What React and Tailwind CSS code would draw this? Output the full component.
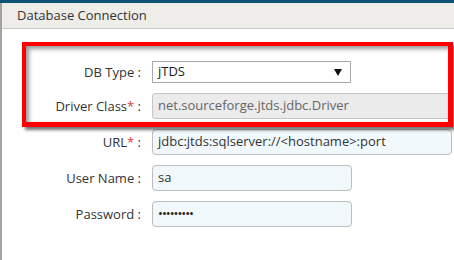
import React from "react";

const font = { fontFamily: "'Open Sans', 'Noto Sans', sans-serif" };

function Label({ children, req }) {
  return (
    <div className="text-right text-[13px] leading-none text-[#333] whitespace-nowrap pr-[1px]">
      {children}
      {req && <span className="text-[#e03a3a]">*</span>}
      <span> :</span>
    </div>
  );
}

export default function App() {
  return (
    <div
      className="relative w-[454px] h-[260px] bg-white overflow-hidden font-['Open_Sans',sans-serif]"
    >
      <div className="h-[3px] bg-[#0d5173]" />
      <div className="h-[257px] border-l-2 border-[#a3a3a3] flex flex-col">
        <div className="h-[26px] bg-[#eeedea] border-b border-[#c9c9c9] flex items-center pl-[15px] text-[13px] text-[#333]">
          Database Connection
        </div>
        <div className="pt-[32px] grid grid-cols-[140px_1fr] gap-x-[10px] gap-y-[10px] items-center">
          <Label>DB Type</Label>
          <div className="w-[199px] h-[22px] border border-[#a9a9a9] bg-white flex items-center justify-between pl-[5px] pr-[8px] text-[13px] text-[#222]">
            <span>jTDS</span>
            <svg width="8" height="7" viewBox="0 0 8 7">
              <polygon points="0,0 8,0 4,7" fill="#111" />
            </svg>
          </div>

          <Label req>Driver Class</Label>
          <div className="w-[300px] h-[26px] border border-[#c4c4c4] rounded-[3px] bg-[#ebebeb] flex items-center pl-[5px] text-[13px] text-[#666]">
            net.sourceforge.jtds.jdbc.Driver
          </div>

          <Label req>URL</Label>
          <div className="w-[300px] h-[26px] border border-[#bdbdbd] rounded-[4px] bg-[#f1f9fd] flex items-center pl-[5px] text-[13px] text-[#333]">
            jdbc:jtds:sqlserver://&lt;hostname&gt;:port
          </div>

          <Label>User Name</Label>
          <div className="w-[200px] h-[26px] border border-[#bdbdbd] rounded-[4px] bg-[#f1f9fd] flex items-center pl-[5px] text-[13px] text-[#333]">
            sa
          </div>

          <Label>Password</Label>
          <div className="w-[200px] h-[26px] border border-[#bdbdbd] rounded-[4px] bg-[#f1f9fd] flex items-center pl-[5px] text-[13px] text-[#222] tracking-[-1px]">
            •••••••••
          </div>
        </div>
      </div>
      <div className="absolute left-[22px] top-[42px] w-[431px] h-[85px] border-t-4 border-l-4 border-r-[5px] border-b-[5px] border-[#ff0000] shadow-[3px_3px_3px_rgba(0,0,0,0.55),inset_3px_3px_4px_rgba(0,0,0,0.4)]" />
    </div>
  );
}
